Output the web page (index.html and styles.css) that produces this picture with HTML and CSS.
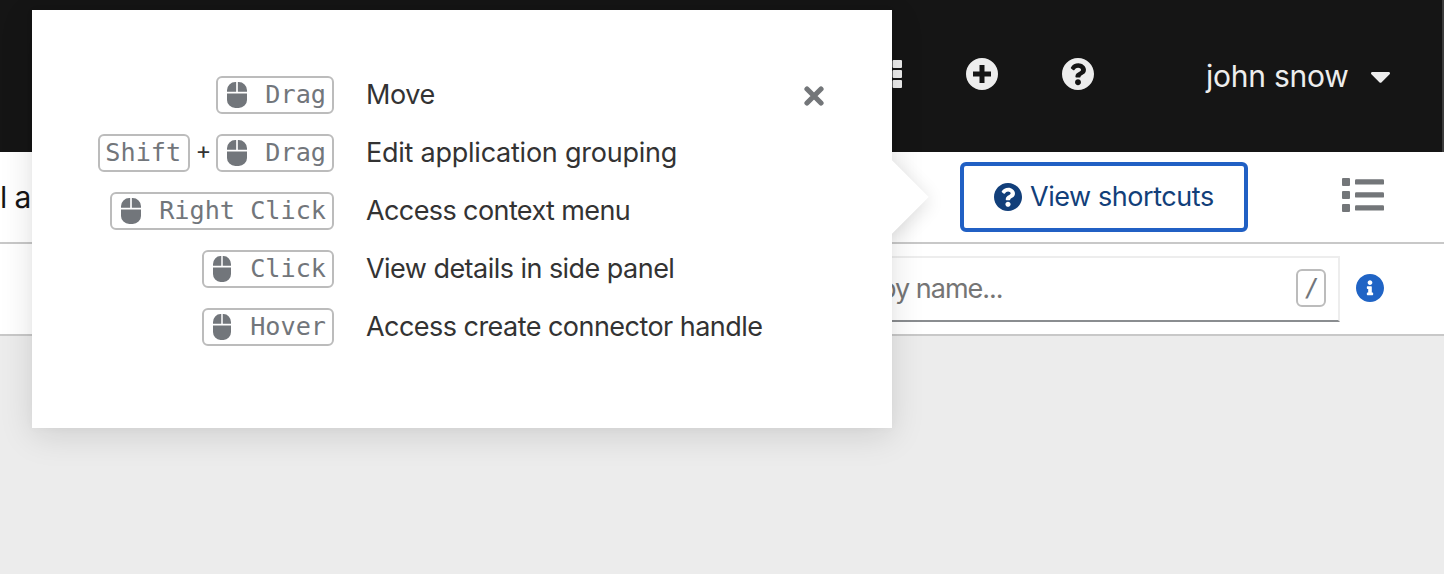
FILE: index.html
```
<!DOCTYPE html>
<html lang="en">
<head>
<meta charset="utf-8">
<title>Topology shortcuts</title>
<link rel="stylesheet" href="styles.css">
</head>
<body>
<svg class="defs" aria-hidden="true">
  <symbol id="mouse" viewBox="0 0 384 512" preserveAspectRatio="none"><path d="M0 352a160 160 0 0 0 160 160h64a160 160 0 0 0 160-160V224H0zM176 0h-16A160 160 0 0 0 0 160v32h176zm48 0h-16v192h176v-32A160 160 0 0 0 224 0z"/></symbol>
  <symbol id="question" viewBox="8 8 496 496"><path d="M504 256c0 136.997-111.043 248-248 248S8 392.997 8 256C8 119.083 119.043 8 256 8s248 111.083 248 248zM262.655 90c-54.497 0-89.255 22.957-116.549 63.758-3.536 5.286-2.353 12.415 2.715 16.258l34.699 26.31c5.205 3.947 12.621 3.008 16.665-2.122 17.864-22.658 30.113-35.797 57.303-35.797 20.429 0 45.698 13.148 45.698 32.958 0 14.976-12.363 22.667-32.534 33.976C247.128 238.528 216 254.941 216 296v4c0 6.627 5.373 12 12 12h56c6.627 0 12-5.373 12-12v-1.333c0-28.462 83.186-29.647 83.186-106.667 0-58.002-60.165-102-116.531-102zM256 338c-25.365 0-46 20.635-46 46 0 25.364 20.635 46 46 46s46-20.636 46-46c0-25.365-20.635-46-46-46z"/></symbol>
</svg>
<header class="masthead">
  <svg class="apps" viewBox="0 0 32 28"><path d="M0 0h9v8H0zM11.5 0h9v8h-9zM0 10h9v8H0zM11.5 10h9v8h-9zM0 20h9v8H0zM11.5 20h9v8h-9z"/><rect x="22.6" width="9.4" height="8" rx="1"/><rect x="22.6" y="10" width="9.4" height="8" rx="1"/><rect x="22.6" y="20" width="9.4" height="8" rx="1"/></svg>
  <svg class="round" viewBox="0 0 32 32"><path fill-rule="evenodd" d="M16 0a16 16 0 1 1 0 32 16 16 0 0 1 0-32zM13.5 7v6.5H7v5h6.500V25h5v-6.500H25v-5h-6.500V7z"/></svg>
  <svg class="round"><use href="#question"/></svg>
  <div class="user"><span class="user-name">john snow</span>
    <svg class="caret" viewBox="11 192 298 169"><path d="M31.3 192h257.3c17.8 0 26.7 21.5 14.1 34.1L174.1 354.7c-7.8 7.8-20.5 7.8-28.3 0L17.2 226.1C4.6 213.5 13.5 192 31.3 192z"/></svg>
  </div>
</header>
<div class="bar actions">
  <span class="filter">l a</span>
  <button class="view"><svg class="view-icon"><use href="#question"/></svg><span class="view-label">View shortcuts</span></button>
  <svg class="list" viewBox="0 0 42 34"><rect width="8" height="8" rx="1"/><rect y="13" width="8" height="8" rx="1"/><rect y="26" width="8" height="8" rx="1"/><rect x="13" y="1.200" width="29" height="5.400" rx="1.200"/><rect x="13" y="14.200" width="29" height="5.400" rx="1.200"/><rect x="13" y="27.200" width="29" height="5.400" rx="1.200"/></svg>
</div>
<div class="bar tools">
  <div class="search"><span class="placeholder">by name...</span><kbd class="slash">/</kbd></div>
  <svg class="info" viewBox="8 8 496 496"><path d="M256 8C119.043 8 8 119.083 8 256c0 136.997 111.043 248 248 248s248-111.003 248-248C504 119.083 392.957 8 256 8zm0 110c23.196 0 42 18.804 42 42s-18.804 42-42 42-42-18.804-42-42 18.804-42 42-42zm56 254c0 6.627-5.373 12-12 12h-88c-6.627 0-12-5.373-12-12v-24c0-6.627 5.373-12 12-12h12v-64h-12c-6.627 0-12-5.373-12-12v-24c0-6.627 5.373-12 12-12h64c6.627 0 12 5.373 12 12v100h12c6.627 0 12 5.373 12 12v24z"/></svg>
</div>
<section class="popover">
  <div class="arrow"></div>
  <div class="content">
    <div class="row"><div class="keys"><kbd><svg class="mouse"><use href="#mouse"/></svg>Drag</kbd></div><span class="t-move">Move</span></div>
    <div class="row"><div class="keys"><kbd class="shift">Shift</kbd><span class="plus">+</span><kbd><svg class="mouse"><use href="#mouse"/></svg>Drag</kbd></div><span class="t-edit">Edit application grouping</span></div>
    <div class="row"><div class="keys"><kbd><svg class="mouse"><use href="#mouse"/></svg>Right Click</kbd></div><span class="t-menu">Access context menu</span></div>
    <div class="row"><div class="keys"><kbd><svg class="mouse narrow"><use href="#mouse"/></svg>Click</kbd></div><span class="t-view">View details in side panel</span></div>
    <div class="row"><div class="keys"><kbd><svg class="mouse narrow"><use href="#mouse"/></svg>Hover</kbd></div><span class="t-conn">Access create connector handle</span></div>
  </div>
  <svg class="close" viewBox="0 0 20 20"><path d="M3 3l14 14M17 3L3 17"/></svg>
</section>
</body>
</html>
```
FILE: styles.css
```
* { box-sizing: border-box; }
body { margin: 0; height: 574px; overflow: hidden; position: relative; background: #ececec; color: #333; font: 27px/36px Inter, "Liberation Sans", sans-serif; }
svg { display: block; flex: none; fill: currentColor; }
span { white-space: nowrap; }
.defs { position: absolute; width: 0; height: 0; }
.masthead { height: 152px; display: flex; align-items: center; padding: 0 52px 4px 870px; background: #151515; border-right: 2px solid #3c3c3c; color: #ededed; }
.apps { width: 32px; height: 28px; }
.round { width: 32px; height: 32px; margin-left: 64px; }
.user { margin-left: auto; display: flex; align-items: center; justify-content: space-between; width: 184px; padding-top: 4px; }
.user-name { font-size: 30px; letter-spacing: -.25px; }
.caret { width: 19px; height: 11px; margin-top: 3px; }
.bar { display: flex; align-items: center; background: #fff; border-bottom: 2px solid #c8c8c8; height: 92px; }
.filter { width: 960px; font-size: 30px; letter-spacing: -.6px; color: #151515; }
.view { width: 288px; height: 70px; padding: 0 0 0 30px; display: flex; align-items: center; gap: 8px; border: 4px solid #2160c4; border-radius: 6px; background: #fff; color: #123f7a; font: inherit; }
.view-icon { width: 28px; height: 28px; margin-bottom: 1px; }
.view-label { letter-spacing: -.44px; }
.list { width: 42px; height: 34px; margin: 0 0 4px 94px; color: #737679; }
.search { width: 540px; height: 66px; margin-left: 800px; padding: 0 12px 2px 78px; display: flex; align-items: center; justify-content: space-between; border: 2px solid #ededed; border-bottom-color: #8a8d90; color: #757575; }
.placeholder { padding-top: 2px; letter-spacing: -1px; }
.info { width: 28px; height: 28px; margin: 0 0 2px 16px; color: #2064c5; }
kbd { display: flex; align-items: center; height: 38px; padding: 0 6px; border: 2px solid #bcbcbc; border-radius: 6px; background: #fff; color: #72767b; font: 25.2px/36px "DejaVu Sans Mono", monospace; white-space: nowrap; }
.shift { width: 92px; padding-left: 5px; }
.slash { width: 30px; }
.popover { position: absolute; left: 32px; top: 10px; width: 860px; height: 418px; background: #fff; box-shadow: 0 8px 32px rgba(0,0,0,.12), 0 0 8px rgba(0,0,0,.03); display: flex; align-items: flex-start; justify-content: space-between; padding: 56px 68px 0 64px; }
/* The arrow box shows only the half of the rotated square that leaves the panel. */
.arrow { position: absolute; left: 100%; top: 142px; width: 70px; height: 90px; overflow: hidden; }
.arrow::before { content: ""; position: absolute; left: -26px; top: 19px; width: 52px; height: 52px; background: #fff; transform: rotate(45deg); box-shadow: 4px 2px 18px rgba(0,0,0,.12); }
.row { display: flex; align-items: center; height: 58px; gap: 32px; }
.keys { width: 238px; display: flex; align-items: center; justify-content: flex-end; }
.mouse { width: 20px; height: 26px; margin: 0 18px 0 3px; }
.narrow { width: 18px; margin-right: 19px; }
.plus { width: 26px; text-align: center; font-size: 24px; line-height: 32px; padding-bottom: 4px; }
.t-move { letter-spacing: -.4px; }
.t-edit { letter-spacing: -.24px; }
.t-menu { letter-spacing: -.6px; }
.t-view { letter-spacing: -.54px; }
.t-conn { letter-spacing: -.54px; }
.close { width: 20px; height: 20px; margin-top: 20px; stroke: #737679; stroke-width: 5.2; stroke-linecap: round; }
```
